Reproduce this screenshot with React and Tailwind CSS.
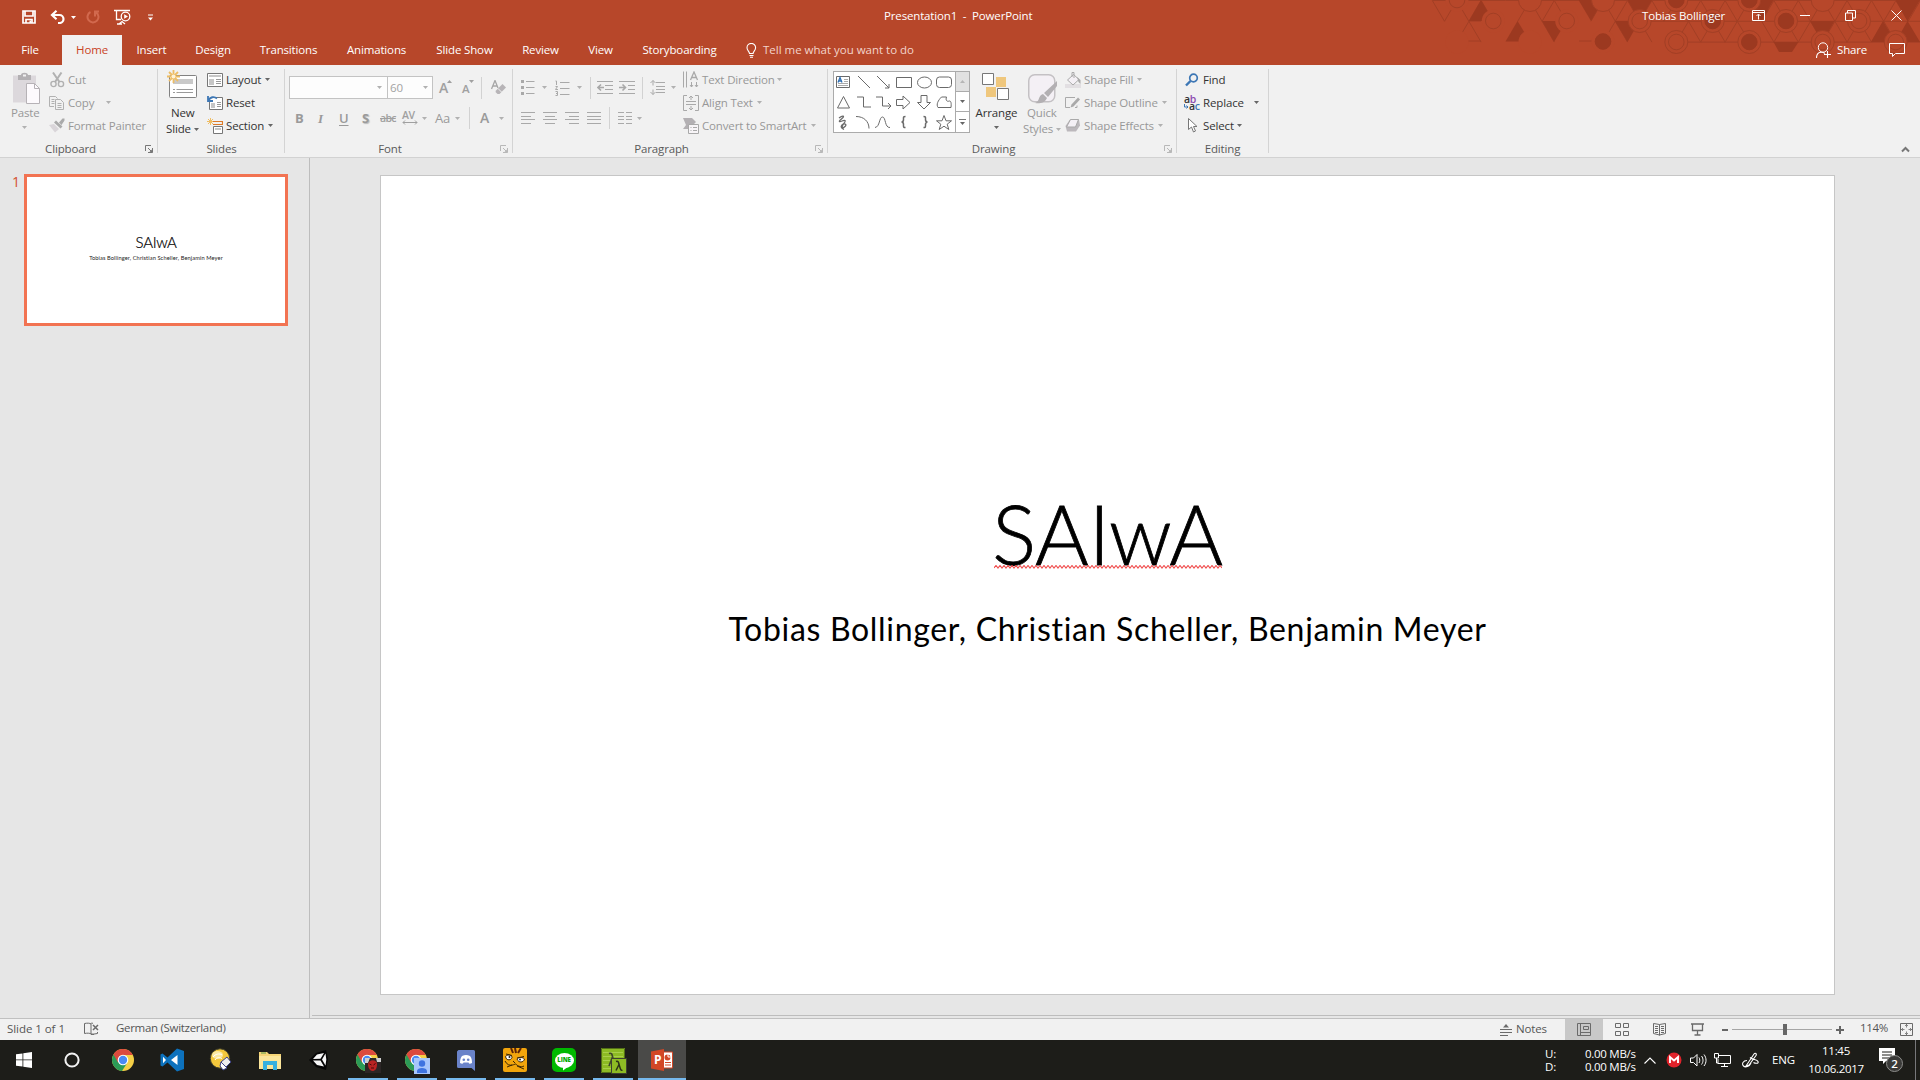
import React from "react";

/* ---------- small helpers ---------- */

function Svg({ w, h, className = "", children }) {
  return (
    <svg width={w} height={h} viewBox={`0 0 ${w} ${h}`} fill="none" className={`shrink-0 ${className}`}>
      {children}
    </svg>
  );
}

function Caret({ className = "text-[#666]" }) {
  return (
    <Svg w={5} h={3} className={className}>
      <path d="M0 0h5L2.500 3z" fill="currentColor" />
    </Svg>
  );
}

const DIM = "text-[#989898]";
const DARK = "text-[#333]";
const CARET_DIM = "text-[#b1b1b1]";

function Launcher({ dim }) {
  return (
    <Svg w={8} h={8} className={dim ? "text-[#b8b8b8]" : "text-[#777]"}>
      <path d="M.5 6V.5H6M3 3l3 3M7.500 3v4.500H3" stroke="currentColor" />
      <path d="M7.500 4v3.500H4z" fill="currentColor" />
    </Svg>
  );
}

function Group({ width, label, labelPad = "", launcher, children }) {
  return (
    <div className={`relative flex h-full shrink-0 flex-col ${width}`}>
      <div className="flex h-[76px] pt-[3px]">{children}</div>
      <div className={`flex h-[16px] items-center justify-center text-[#5a5a5a] ${labelPad}`}>{label}</div>
      {launcher && (
        <div className="absolute right-[5px] bottom-[4px]">
          <Launcher dim={launcher === "dim"} />
        </div>
      )}
      <div className="absolute top-[4px] right-0 h-[84px] w-px bg-[#d4d4d4]" />
    </div>
  );
}

function Command({ icon, label, labelWidth, caret, dim }) {
  return (
    <div className={`flex h-[23px] items-center ${dim ? DIM : DARK}`}>
      <div className="flex w-[19px] shrink-0 items-center">{icon}</div>
      <span className={`shrink-0 ${labelWidth}`}>{label}</span>
      {caret && <Caret className={dim ? CARET_DIM : "text-[#666]"} />}
    </div>
  );
}

function Divider({ className = "" }) {
  return <div className={`h-[22px] w-px shrink-0 bg-[#d2d2d2] ${className}`} />;
}

/* ---------- title bar pattern ---------- */

const LINE = "#a23f25";
const FILL = "#9c3920";

function HexPattern() {
  const STEP = 24.4;
  const RISE = 20.8;
  const X0 = 56.7;
  const point = (row, k) => [X0 + k * STEP + (row % 2 ? -STEP / 2 : 0), row * RISE + 0.5];
  const edges = [];
  for (let k = -1; k < 20; k++) {
    const [ax, ay] = point(0, k);
    edges.push(`M${ax} ${ay}h${STEP}`);
    const skip = [2, 5];
    if (k < 19 && !skip.includes(k)) edges.push(`M${ax} ${ay}l${STEP / 2} ${RISE}`);
    if (k >= 0 && ![2, 5].includes(k)) edges.push(`M${ax} ${ay}l${-STEP / 2} ${RISE}`);
    if (k > 6) edges.push(`M${point(1, k)[0]} ${RISE + 0.5}h${STEP}`);
    if (k > 8) edges.push(`M${point(2, k)[0]} ${2 * RISE + 0.5}h${STEP}`);
    if ([1, 4, 7, 8, 10, 11, 12, 13, 14, 15, 16, 17, 18].includes(k))
      edges.push(`M${point(1, k)[0]} ${RISE + 0.5}l${STEP / 2} ${RISE}`);
    if ([1, 7, 10, 11, 12, 14, 15, 16, 17, 18].includes(k))
      edges.push(`M${point(1, k)[0]} ${RISE + 0.5}l${-STEP / 2} ${RISE}`);
  }
  edges.push("M68 41h13M179 41h24M69 21h12");
  const tris = [
    "81,0 69,21 93,21", "117.5,21 105.5,41.5 130,41.5", "142,21 166.5,21 154,42",
    "178.5,0 203,0 191,21", "215,21 239.5,21 227.5,42", "227.5,0 252,0 239.5,21",
    "349.5,0 373.5,0 361.5,21", "410,21 434.5,21 422.5,42", "483,21 471,42 495.5,42",
    "507.5,21 495.5,42 520,42", "495.5,0 520,0 507.5,21", "373.5,42 398.5,42 392,52 379,52",
  ];
  /* kinds: 0 ring, 1 disc, 2 outer arc only, 3 blank */
  const rings = [
    [57, 0, 0], [130, 0, 2], [203, 0, 2], [276.3, 0, 1], [349.3, 0, 1], [422.7, 0, 2],
    [93.3, 21, 0], [166.7, 21, 0], [239.7, 21, 0], [312.7, 21, 1], [386, 21, 1], [459, 21, 0],
    [203, 41.5, 1], [276.3, 42, 0], [349.3, 42, 1], [422.7, 42, 0], [495.7, 42, 0], [130, 42, 3], [57, 42, 3],
  ];
  const plain = (x, y, kind) => kind === 3 || x < 100 || x === 166.7 || (x === 203 && y > 20);
  return (
    <svg width="520" height="54" viewBox="0 0 520 54" fill="none" className="absolute top-0 right-0">
      <path d={edges.join("")} stroke={LINE} />
      {tris.map((p) => <polygon key={p} points={p} fill={FILL} />)}
      {rings.map(([x, y, kind]) => (
        <g key={`${x}-${y}`}>
          <circle cx={x} cy={y} r="11.500" fill="#b7472a" stroke={plain(x, y, kind) ? "none" : LINE} />
          {kind < 2 && <circle cx={x} cy={y} r="7.800" fill={kind === 1 ? FILL : "none"} stroke={kind === 1 ? FILL : LINE} />}
        </g>
      ))}
    </svg>
  );
}

/* ---------- header ---------- */

function TitleBar() {
  return (
    <div className="relative flex h-[35px] items-center text-white">
      <div className="flex h-[28px] items-center pt-[2px] pl-[22px] mb-[3px]">
        <Svg w={14} h={14}>
          <path d="M1 1h12v12H1zM3 1v5h8V1M4 13V9.500h6V13" stroke="#fff" strokeWidth="1.700" />
          <path d="M7.500 10.500h1.500V13h-1.500z" fill="#fff" />
        </Svg>
        <Svg w={16} h={14} className="ml-[14px]">
          <path d="M2 5h7.500a4 4 0 0 1 0 8H8M6.500.8 2 5l4.500 4.200" stroke="#fff" strokeWidth="2.200" />
        </Svg>
        <Caret className="ml-[5px] text-white" />
        <Svg w={14} h={14} className="ml-[10px]">
          <path d="M4.500 2A5.500 5.500 0 1 0 10 2.300M13 1.500H9v5" stroke="#d2694e" strokeWidth="2" />
        </Svg>
        <Svg w={17} h={16} className="ml-[14px]">
          <path d="M0 1.500h16M2.500 1v9.500H7M5 15l3-2.500 3 2.500M3 15h5" stroke="#fff" strokeWidth="1.300" />
          <circle cx="11.500" cy="7.500" r="4.300" fill="#b7472a" stroke="#fff" strokeWidth="1.300" />
          <path d="M10.200 5.300 14 7.500l-3.800 2.200z" fill="#fff" />
        </Svg>
        <Svg w={5} h={7} className="ml-[17px]">
          <path d="M0 1h5" stroke="#fff" />
          <path d="M0 3.500h5L2.500 6.500z" fill="#fff" />
        </Svg>
      </div>
      <div className="mb-[3px] ml-[731px] w-[758px] whitespace-pre">Presentation1  -  PowerPoint</div>
      <div className="mb-[3px] flex items-center">
        <span className="w-[110px]">Tobias Bollinger</span>
        <Svg w={13} h={11} className="mb-[2px]">
          <path d="M.5.500h12v10H.500zM.5 2.500h12M6.500 9.500v-5M4.500 6l2-2 2 2" stroke="#fff" />
        </Svg>
        <Svg w={10} h={11} className="mb-[2px] ml-[35px]"><path d="M0 5.500h10" stroke="#fff" /></Svg>
        <Svg w={11} h={11} className="mb-[2px] ml-[35px]">
          <path d="M.5 3h7v7.500h-7zM2.500 3V.5h8v7.500h-3" stroke="#fff" />
        </Svg>
        <Svg w={11} h={11} className="mb-[2px] ml-[35px]"><path d="m.5.500 10 10m0-10-10 10" stroke="#fff" /></Svg>
      </div>
    </div>
  );
}

const TABS = [
  ["File", "w-[60px] mr-[2px]"], ["Home", "w-[60px]"], ["Insert", "w-[59px]"], ["Design", "w-[64px]"],
  ["Transitions", "w-[87px]"], ["Animations", "w-[89px]"], ["Slide Show", "w-[87px]"], ["Review", "w-[65px]"],
  ["View", "w-[55px]"], ["Storyboarding", "w-[103px]"],
];

function Tabs() {
  return (
    <div className="relative flex h-[30px] text-white">
      {TABS.map(([name, width]) => (
        <div
          key={name}
          className={`flex h-full items-center justify-center ${width} ${name === "Home" ? "bg-[#f1f1f1] text-[#c9431f]" : ""}`}
        >
          {name}
        </div>
      ))}
      <div className="ml-[15px] flex items-center tracking-[-0.01px] text-[#f3d4cb]">
        <Svg w={11} h={15} className="mr-[6px]">
          <path d="M3.500 10.500C3.500 8.500 1 7.500 1 4.700a4.300 4.300 0 0 1 8.600 0c0 2.800-2.500 3.800-2.500 5.800zM3.500 12.500h4M4 14.300h3" stroke="#fff" strokeWidth="1.100" />
        </Svg>
        Tell me what you want to do
      </div>
      <div className="ml-auto flex items-center pr-[15px]">
        <Svg w={16} h={17}>
          <circle cx="7" cy="5.500" r="4.700" stroke="#fff" />
          <path d="M.5 16c0-3.500 2-5.700 5-5.700 1.500 0 2.500.4 3.300 1.200M11.500 9v7M8 12.500h7" stroke="#fff" strokeWidth="1.100" />
        </Svg>
        <span className="ml-[5px] w-[52px]">Share</span>
        <Svg w={16} h={15}><path d="M.5.500h15v10h-9L3.500 13.500v-3h-3z" stroke="#fff" /></Svg>
      </div>
    </div>
  );
}

/* ---------- ribbon groups ---------- */

function ClipboardGroup() {
  return (
    <Group width="w-[158px]" label="Clipboard" labelPad="pr-[17px]" launcher="on">
      <div className={`ml-[9px] flex w-[40px] flex-col pt-[4px] ${DIM}`}>
        <Svg w={30} h={32} className="ml-[3px]">
          <path d="M1 3.500h23v27H1z" fill="#dcd8dc" />
          <path d="M6 3h3c0-3 7-3 7 0h3v5H6z" fill="#b3b0b3" />
          <path d="M11 2.500h3v2h-3z" fill="#f1f1f1" />
          <path d="M14.500 11.500h8l5 5v15h-13z" fill="#fdfafd" stroke="#b6b2b6" />
          <path d="M22.500 11.500v5h5" stroke="#b6b2b6" />
        </Svg>
        <span className="mt-[1px] ml-[2px] h-[16px] leading-[16px]">Paste</span>
        <Caret className={`mt-[5px] ml-[13px] ${CARET_DIM}`} />
      </div>
      <div>
        <Command dim label="Cut" icon={
          <Svg w={15} h={16} className="ml-[1px]">
            <path d="M3 .5 9.500 10M11.500.5 5 10" stroke="#b1b1b1" strokeWidth="2" />
            <circle cx="3.500" cy="12" r="2.600" stroke="#b1b1b1" strokeWidth="1.400" />
            <circle cx="11" cy="12" r="2.600" stroke="#b1b1b1" strokeWidth="1.400" />
          </Svg>} />
        <Command dim caret label="Copy" labelWidth="w-[38px]" icon={
          <Svg w={16} h={16}>
            <path d="M5 11.500H.5v-10h6l2 2M6.500 4.500h5l3 3v7h-8z" stroke="#b1b1b1" />
            <path d="M2.500 4.500h3M2.500 6.500h3M2.500 8.500h3M8.500 8.500h4M8.500 10.500h4M8.500 12.500h4" stroke="#b1b1b1" />
          </Svg>} />
        <Command dim label="Format Painter" icon={
          <Svg w={16} h={15}>
            <path d="M0 7l5-1 5 5-4 3.500z" fill="#d9d5d9" />
            <path d="m5 4.500 2-2 6.500 6-2 2zM10 4.500 13.500.5h2v2L12.500 7z" fill="#aaa" />
          </Svg>} />
      </div>
    </Group>
  );
}

function SlidesGroup() {
  return (
    <Group width="w-[127px]" label="Slides">
      <div className={`ml-[8px] flex w-[41px] flex-col pt-[2px] ${DARK}`}>
        <Svg w={32} h={30} className="ml-[1px]">
          <rect x="2.500" y="5.500" width="27" height="22" rx="1" fill="#fff" stroke="#828282" />
          <path d="M6 9h20v5H6z" fill="#c9c9c9" />
          <path d="M6 19.500h2M9.500 19.500H26M6 22.500h2M9.500 22.500H26" stroke="#9a9a9a" />
          <path d="M6.500 0v13M0 6.500h13M2 2l9 9M11 2l-9 9" stroke="#eebd64" strokeWidth="1.800" />
          <circle cx="6.500" cy="6.500" r="2" fill="#fff3d5" />
        </Svg>
        <span className="mt-[5px] ml-[5px] h-[16px] leading-[16px]">New</span>
        <div className="flex h-[16px] items-center"><span className="w-[28px]">Slide</span><Caret /></div>
      </div>
      <div>
        <Command caret label="Layout" labelWidth="w-[39px]" icon={
          <Svg w={16} h={14}>
            <path d="M.5.500h15v13H.500z" fill="#fff" stroke="#777" />
            <path d="M2 2h12v2H2zM2 6h5v6H2z" fill="#c6c6c6" />
            <path d="M9 6.500h5M9 8.500h5M9 10.500h5" stroke="#999" />
          </Svg>} />
        <Command label="Reset" icon={
          <Svg w={16} h={15}>
            <path d="M2.500 5v9.500h13v-12H9" fill="#fff" stroke="#777" />
            <path d="M4 8h4v5H4z" fill="#c6c6c6" />
            <path d="M10 7.500h4M10 9.500h4M10 11.500h4" stroke="#999" />
            <path d="M1.500 5.500C3 2 7 1 10 3.500M1 1v5h5" stroke="#3d77b5" strokeWidth="1.800" />
          </Svg>} />
        <Command caret label="Section" labelWidth="w-[42px]" icon={
          <Svg w={16} h={16}>
            <path d="M3.500 0v7M0 3.500h7M1 1l5 5M6 1 1 6" stroke="#eebd64" />
            <path d="M6 3.500h9.500v3H6" stroke="#dd7b28" strokeWidth="1.200" />
            <path d="M6.500 8.500h9v7h-9z" fill="#fff" stroke="#777" />
            <path d="M8 10h6v2H8z" fill="#c6c6c6" />
          </Svg>} />
      </div>
    </Group>
  );
}

function FontGroup() {
  const letter = "text-[13px] leading-none text-[#9a9a9a]";
  return (
    <Group width="w-[228px]" label="Font" labelPad="pr-[18px]" launcher="dim">
      <div className="ml-[4px] flex flex-col">
        <div className="mt-[8px] flex h-[23px] items-center">
          <div className="flex h-[23px] w-[99px] items-center justify-end border border-[#c3c3c3] bg-[#fdfdfd] pr-[5px]">
            <Caret className={CARET_DIM} />
          </div>
          <div className="-ml-px flex h-[23px] w-[46px] items-center border border-[#c3c3c3] bg-[#fdfdfd] pl-[2px] text-[#a3a3a3]">
            <span className="w-[33px]">60</span>
            <Caret className={CARET_DIM} />
          </div>
          <div className="ml-[6px] flex w-[23px] items-center font-semibold text-[#a0a0a0]">
            <span className="text-[14px]">A</span>
            <Svg w={5} h={3} className="mb-[12px] -ml-[1px]"><path d="M0 3h5L2.500 0z" fill="#a0a0a0" /></Svg>
          </div>
          <div className="flex w-[19px] items-center font-semibold text-[#a0a0a0]">
            <span className="mt-[2px] text-[11.500px]">A</span>
            <Svg w={5} h={3} className="mb-[12px]"><path d="M0 0h5L2.500 3z" fill="#a0a0a0" /></Svg>
          </div>
          <Divider />
          <Svg w={16} h={16} className="ml-[9px]">
            <path d="M.5 9 4 .5 7 8M1.800 6h4" stroke="#a6a6a6" strokeWidth="1.300" />
            <path d="m5 10.500 6.500-6.500 3.500 3.500L8.500 14H6.500L4.500 12z" fill="#b7b4b7" />
            <path d="m7 8.500 4 4" stroke="#f1f1f1" />
          </Svg>
        </div>
        <div className="mt-[8px] flex h-[22px] items-center">
          <span className={`ml-[6px] w-[23px] font-bold ${letter}`}>B</span>
          <span className={`w-[21px] font-['Liberation_Serif',serif] italic font-bold ${letter}`}>I</span>
          <span className={`w-[23px] font-semibold underline underline-offset-2 ${letter}`}>U</span>
          <span className={`w-[18px] font-bold [text-shadow:1px_1px_1px_#bbb] ${letter}`}>S</span>
          <span className="w-[22px] text-[10.500px] leading-none font-semibold tracking-[-0.7px] text-[#a0a0a0] line-through">abc</span>
          <div className="flex w-[20px] flex-col">
            <span className="text-[10.500px] leading-[9px] font-semibold tracking-[-0.4px] text-[#a0a0a0]">AV</span>
            <Svg w={16} h={5}><path d="M1 2.500h14M3 .5l-2 2 2 2M13 .5l2 2-2 2" stroke="#a0a0a0" /></Svg>
          </div>
          <Caret className={CARET_DIM} />
          <span className={`ml-[8px] w-[20px] ${letter}`}>Aa</span>
          <Caret className={CARET_DIM} />
          <Divider className="ml-[9px]" />
          <span className="ml-[10px] w-[19px] text-[14px] leading-none font-semibold text-[#9a9a9a]">A</span>
          <Caret className={CARET_DIM} />
        </div>
      </div>
    </Group>
  );
}

const G = "#a9a9a9";

function AlignIcon({ d, className = "" }) {
  return <Svg w={14} h={12} className={className}><path d={d} stroke={G} /></Svg>;
}

function ParagraphGroup() {
  return (
    <Group width="w-[315px]" label="Paragraph" labelPad="pr-[18px]" launcher="dim">
      <div className="ml-[8px] flex w-[162px] flex-col">
        <div className="mt-[8px] flex h-[23px] items-center">
          <Svg w={14} h={15}>
            <path d="M5 1.500h8.500M5 7.500h8.500M5 13.500h8.500" stroke={G} />
            <path d="M0 0h3v3H0zM0 6h3v3H0zM0 12h3v3H0z" fill={G} />
          </Svg>
          <Caret className={`ml-[7px] ${CARET_DIM}`} />
          <Svg w={15} h={16} className="ml-[8px]">
            <path d="M5 2.500h9.500M5 8.500h9.500M5 14.500h9.500" stroke={G} />
            <path d="M.5 1h1v4M.5 6.500h2L.5 9.500h2.500M.5 11.500h2v4h-2M1 13.500h1.500" stroke={G} />
          </Svg>
          <Caret className={`ml-[7px] ${CARET_DIM}`} />
          <Divider className="ml-[8px]" />
          <Svg w={16} h={14} className="ml-[6px]">
            <path d="M0 .5h16M8 4.500h8M8 8.500h8M0 12.500h16" stroke={G} />
            <path d="M7 6.500H1M4 3.500l-3 3 3 3" stroke={G} strokeWidth="1.600" />
          </Svg>
          <Svg w={16} h={14} className="ml-[6px]">
            <path d="M0 .5h16M9 4.500h7M9 8.500h7M0 12.500h16" stroke={G} />
            <path d="M0 6.500h6M3.500 3.500l3 3-3 3" stroke={G} strokeWidth="1.600" />
          </Svg>
          <Divider className="ml-[7px]" />
          <Svg w={15} h={17} className="ml-[7px]">
            <path d="M6 3.500h9M6 7.500h9M6 10.500h9M6 13.500h9M3 1.500v5M3 10.500v5M.5 4 3 1.500 5.500 4M.5 13 3 15.500 5.500 13" stroke={G} />
          </Svg>
          <Caret className={`ml-[6px] ${CARET_DIM}`} />
        </div>
        <div className="mt-[8px] flex h-[22px] items-center gap-[8px]">
          <AlignIcon d="M0 .5h14M0 4.500h10M0 7.500h14M0 11.500h10" />
          <AlignIcon d="M0 .5h14M2 4.500h10M0 7.500h14M2 11.500h10" />
          <AlignIcon d="M0 .5h14M4 4.500h10M0 7.500h14M4 11.500h10" />
          <AlignIcon d="M0 .5h14M0 4.500h14M0 7.500h14M0 11.500h14" />
          <Divider />
          <AlignIcon d="M0 .5h6M8 .5h6M0 4.500h6M8 4.500h6M0 7.500h6M8 7.500h6M0 11.500h6M8 11.500h6" />
          <Caret className={`-ml-[3px] ${CARET_DIM}`} />
        </div>
      </div>
      <div>
        <Command dim caret label="Text Direction" labelWidth="w-[75px]" icon={
          <Svg w={16} h={17}>
            <path d="M.5.5v16M3.500.5v16M8.500 11v5M13.500 11v5M7 14l1.500 2 1.500-2M12 14l1.500 2 1.500-2" stroke={G} />
            <path d="m7.500 9 3.500-8 3.500 8M8.500 6.500h5" stroke={G} strokeWidth="1.300" />
          </Svg>} />
        <Command dim caret label="Align Text" labelWidth="w-[55px]" icon={
          <Svg w={16} h={16}>
            <path d="M4 .5H.5v15H4M12 .5h3.500v15H12M3 6.500h10M3 9.500h10M8 1v4M6 3l2-2 2 2M8 15v-4M6 13l2 2 2-2" stroke={G} />
          </Svg>} />
        <Command dim caret label="Convert to SmartArt" labelWidth="w-[109px]" icon={
          <Svg w={16} h={16}>
            <path d="M0 0h9l4 4-3 3H5v4H0l3-4z" fill="#b3b0b3" />
            <path d="M5.500 6.500h10v9h-10z" fill="#f8f5f8" stroke={G} />
            <path d="M7.500 9.500h1M10 9.500h4M7.500 12.500h1M10 12.500h4" stroke={G} />
          </Svg>} />
      </div>
    </Group>
  );
}

const SHAPES = [
  <g key="0"><path d="M2.500 4.500h13v11h-13z" /><path d="M10 7.500h4M10 9.500h4M4 11.500h10M4 13.500h10" stroke="#aaa" /><path d="m4 10.500 2-5 2 5M5 9h2.500" stroke="#2f6fb3" strokeWidth="1.300" /></g>,
  <path key="1" d="m4 4 12 12" />,
  <path key="2" d="m3 4 12 12M15 12v4h-4" />,
  <path key="3" d="M2.500 5.500h15v10h-15z" />,
  <ellipse key="4" cx="9.500" cy="10.500" rx="7" ry="5.500" />,
  <rect key="5" x="1.500" y="5" width="15" height="10.500" rx="3" />,
  <path key="6" d="M9.500 4.500 15.500 16h-12z" />,
  <path key="7" d="M3 5h6.500v10H17" />,
  <path key="8" d="M2 5h6.500v9H17M14 11l3 3-3 3" />,
  <path key="9" d="M2.500 7.500H9V4l7 6.500L9 17v-3.500H2.500z" />,
  <path key="10" d="M6 3.500h6v7h3.500L9 17 2.500 10.500H6z" />,
  <path key="11" d="M3 15.500c-2-3 0-7 3.500-10.500h5c-1 3 0 5 3 4 1.500 0 2 2 1.500 6.500z" />,
  <path key="12" d="M5 6c4-3 6-2 3 .5s-4 4 0 2.500 4 0 1.500 3-1 5 1.500 2.500-1-3.500-3-1.500 0 3.500 2 4.500" strokeWidth="1.300" />,
  <path key="13" d="M2 4.500c8 0 13 5 13 12" />,
  <path key="14" d="M1 15.500C6 15 5 5 8.500 5s2 11 7.500 10.500" />,
  <path key="15" d="M11.500 4.500c-2.500 0-2 1-2 3 0 1.500-.5 2.500-2 2.500 1.500 0 2 1 2 2.500 0 2-.5 3 2 3" strokeWidth="1.500" />,
  <path key="16" d="M8.500 4.500c2.500 0 2 1 2 3 0 1.500.5 2.500 2 2.500-1.500 0-2 1-2 2.500 0 2 .5 3-2 3" strokeWidth="1.500" />,
  <path key="17" d="m9 3.500 2 5.300h5.500l-4.300 3.400 1.600 5.300L9 14.200l-4.800 3.300 1.600-5.300L1.500 8.800H7z" />,
];

function DrawingGroup() {
  return (
    <Group width="w-[349px]" label="Drawing" labelPad="pr-[18px]" launcher="dim">
      <div className="mt-[3px] ml-[5px] flex h-[62px] w-[137px] border border-[#ababab] bg-white">
        <div className="grid w-[121px] grid-cols-6 grid-rows-3">
          {SHAPES.map((s, i) => (
            <svg key={i} width="20" height="20" viewBox="0 0 20 20" fill="none" stroke="#6a6a6a">{s}</svg>
          ))}
        </div>
        <div className="flex w-[14px] flex-col divide-y divide-[#ababab] border-l border-[#ababab]">
          <div className="flex h-[20px] items-center justify-center bg-[#e1e1e1]">
            <Svg w={5} h={3}><path d="M0 3h5L2.500 0z" fill="#b5b5b5" /></Svg>
          </div>
          <div className="flex h-[20px] items-center justify-center"><Caret /></div>
          <div className="flex h-[20px] flex-col items-center justify-center gap-[2px]">
            <div className="h-px w-[7px] bg-[#777]" />
            <Caret />
          </div>
        </div>
      </div>
      <div className={`ml-[4px] flex w-[45px] flex-col items-center pt-[5px] ${DARK}`}>
        <Svg w={28} h={28} className="mr-[2px]">
          <path d="M14 4h10v10H14zM4 14h10v10H4z" fill="#efc77d" />
          <path d="M.5.500h11v11H.500zM15.500 15.500h11v11h-11z" fill="#fff" stroke="#777" />
        </Svg>
        <span className="mt-[4px] h-[16px] leading-[16px]">Arrange</span>
        <Caret className="mt-[5px] text-[#666]" />
      </div>
      <div className={`ml-[3px] flex w-[43px] flex-col pt-[6px] ${DIM}`}>
        <Svg w={30} h={31} className="ml-[6px]">
          <rect x=".75" y=".75" width="26" height="27" rx="6" fill="#f4f0f5" stroke="#c4c1c4" strokeWidth="1.500" />
          <path d="M29 7v5l-9 11-4-4zM15 20l4 4c-2 5-8 6-12 5 5-1 3-8 8-9z" fill="#b3b0b3" />
        </Svg>
        <span className="ml-[5px] h-[16px] leading-[16px]">Quick</span>
        <div className="flex h-[16px] items-center pl-px"><span className="w-[33px]">Styles</span><Caret className={CARET_DIM} /></div>
      </div>
      <div>
        <Command dim caret label="Shape Fill" labelWidth="w-[53px]" icon={
          <Svg w={17} h={16}>
            <path d="M0 12h16v4H0z" fill="#e2dfe2" />
            <path d="m2.500 8 6-5.500 5.500 5-6 5.500zM7 5V.5h2V6" fill="#f4f0f5" stroke={G} />
            <path d="m12 5 3.500 3v4l-2-2z" fill={G} />
          </Svg>} />
        <Command dim caret label="Shape Outline" labelWidth="w-[78px]" icon={
          <Svg w={16} h={14}>
            <path d="M10 1.500H.5v10H5M12 9.500v2h-2" stroke={G} />
            <path d="m5.500 11.500 1-3L13 1.500l2 2-6.500 7z" fill={G} />
          </Svg>} />
        <Command dim caret label="Shape Effects" labelWidth="w-[74px]" icon={
          <Svg w={16} h={15}>
            <path d="M5 1.500h9l1 6-4 6H2L.5 8z" fill="#bcb8bc" />
            <path d="M5.500 1.500h8L10.500 9h-9z" fill="#f4f0f5" stroke={G} />
          </Svg>} />
      </div>
    </Group>
  );
}

function EditingGroup() {
  return (
    <Group width="w-[92px]" label="Editing" labelPad="pr-px">
      <div className="ml-[7px]">
        <Command label="Find" icon={
          <Svg w={14} h={14} className="ml-px">
            <circle cx="8.500" cy="5" r="3.800" stroke="#3d77b5" strokeWidth="1.700" />
            <path d="m5.500 8-4.500 4.500" stroke="#3d77b5" strokeWidth="2.400" />
          </Svg>} />
        <Command caret label="Replace" labelWidth="w-[51px]" icon={
          <div className="flex flex-col text-[10.500px] leading-[7px] font-semibold tracking-[-0.3px]">
            <span>a<span className="text-[#8c4bb0]">b</span></span>
            <span className="flex items-end">
              <Svg w={5} h={5} className="mb-[1px]"><path d="M.5 0v3H4M2.500 1.500 4 3 2.500 4.500" stroke="#3d77b5" /></Svg>
              a<span className="text-[#3d77b5]">c</span>
            </span>
          </div>} />
        <Command caret label="Select" labelWidth="w-[34px]" icon={
          <Svg w={12} h={15} className="ml-[4px]">
            <path d="M.5.500v11l3-2.500 2 5 2-1-2-4.500h3.500z" fill="#fff" stroke="#777" />
          </Svg>} />
      </div>
    </Group>
  );
}

/* ---------- workspace ---------- */

function Squiggle() {
  let d = "M0 3";
  for (let x = 2; x <= 228; x += 2) d += `L${x} ${(x / 2) % 2 ? 0.5 : 3}`;
  return <Svg w={228} h={4}><path d={d} stroke="#f04c4c" strokeWidth="1.100" /></Svg>;
}

function Workspace() {
  return (
    <div className="flex h-[860px] bg-[#e6e6e6]">
      <div className="flex w-[310px] shrink-0 border-r border-[#bdbdbd] pt-[16px]">
        <span className="w-[24px] pl-[12px] text-[14px] leading-[15px] text-[#d4502e]">1</span>
        <div className="flex h-[152px] w-[264px] flex-col items-center border-[3px] border-[#f27352] bg-white font-['Lato',sans-serif] text-black">
          <span className="mt-[55px] text-[15px] leading-[20px] font-light tracking-[-0.3px] [-webkit-text-stroke:0.2px_black]">SAIwA</span>
          <span className="mt-[2px] text-[5.700px] leading-[8px] tracking-[0.100px] text-[#222]">Tobias Bollinger, Christian Scheller, Benjamin Meyer</span>
        </div>
      </div>
      <div className="flex min-w-0 flex-1 flex-col">
        <div className="mt-[17px] ml-[70px] flex h-[820px] w-[1455px] flex-col items-center border border-[#c6c6c6] bg-white font-['Lato',sans-serif] text-black">
          <div className="mt-[308px] flex h-[87px] flex-col items-center">
            <span className="text-[82px] leading-[98px] font-light whitespace-nowrap [-webkit-text-stroke:0.8px_black]">SAIwA</span>
            <div className="-mt-[17px]"><Squiggle /></div>
          </div>
          <span className="mt-[38px] text-[32px] leading-[40px] tracking-[0.680px] whitespace-nowrap">Tobias Bollinger, Christian Scheller, Benjamin Meyer</span>
        </div>
        <div className="mt-auto mb-[2px] ml-[2px] h-px bg-[#bdbdbd]" />
      </div>
    </div>
  );
}

function StatusBar() {
  const S = "#6a6a6a";
  return (
    <div className="flex h-[22px] items-center border-t border-[#c0c0c0] bg-[#f1f1f1] text-[#555]">
      <span className="w-[84px] pb-[1px] pl-[7px] tracking-[-0.05px]">Slide 1 of 1</span>
      <Svg w={15} h={14} className="mr-[17px] mb-[1px]">
        <path d="M9 1.500C7.500.5 7 1 7 2v10c-1-1-4-1-6.500-.5V1.500C3 1 6 1 7 2M7 12l3 .5M13.500 10v1.500L7 12.500" stroke={S} />
        <path d="m9 3 5 5M14 3 9 8" stroke={S} strokeWidth="1.500" />
      </Svg>
      <span className="pb-[3px] tracking-[-0.3px]">German (Switzerland)</span>
      <div className="ml-auto flex h-full items-center">
        <Svg w={12} h={12} className="mr-[4px]">
          <path d="M0 5.500h12M0 8.500h12M0 11.500h8" stroke={S} /><path d="M3 3.500h6L6 0z" fill={S} />
        </Svg>
        <span className="w-[49px] pb-[1px]">Notes</span>
        <div className="flex h-full w-[38px] items-center justify-center bg-[#c8c8c8]">
          <Svg w={14} h={13}><path d="M.5.500h13v12H.500zM3.500.5v12M3.500 9.500h10M6.500 3.500h5v3h-5z" stroke={S} /></Svg>
        </div>
        <div className="flex w-[38px] justify-center">
          <Svg w={14} h={13}><path d="M.5.500h5v4h-5zM8.500.500h5v4h-5zM.5 8.500h5v4h-5zM8.500 8.500h5v4h-5z" stroke={S} /></Svg>
        </div>
        <div className="flex w-[37px] justify-center">
          <Svg w={13} h={13}>
            <path d="M.5.500 6.500 1.500l6-1v10l-6 1.500-6-1.500zM6.500 1.500v11M2 3.500h3M2 5.500h3M2 7.500h3M8 3.500h3M8 5.500h3M8 7.500h3M2 9.500h3M8 9.500h3" stroke={S} />
          </Svg>
        </div>
        <div className="flex w-[38px] justify-center">
          <Svg w={13} h={13}><path d="M0 1h13M1.500 1v6.500h10V1M6.500 8v4M3.500 12h6" stroke={S} strokeWidth="1.300" /></Svg>
        </div>
        <div className="ml-[6px] h-[2px] w-[6px] bg-[#666]" />
        <div className="ml-[4px] flex w-[100px] items-center">
          <div className="h-px w-[51px] bg-[#a5a5a5]" />
          <div className="h-[11px] w-[4px] bg-[#666]" />
          <div className="h-px flex-1 bg-[#a5a5a5]" />
        </div>
        <Svg w={8} h={8} className="ml-[4px]"><path d="M0 4h8M4 0v8" stroke="#666" strokeWidth="2" /></Svg>
        <span className="ml-[16px] w-[40px] pb-[3px] tracking-[-0.35px]">114%</span>
        <Svg w={13} h={13} className="mr-[7px]">
          <path d="M.5.500h12v12H.500z" stroke={S} />
          <path d="M6.500 1v3.500M6.500 8.500V12M1 6.500h3.500M8.500 6.500H12M5 3l1.500-1.500L8 3M5 10l1.500 1.500L8 10M3 5 1.500 6.500 3 8M10 5l1.500 1.500L10 8" stroke={S} strokeWidth=".8" />
        </Svg>
      </div>
    </div>
  );
}

/* ---------- taskbar ---------- */

function Chrome() {
  return (
    <>
      <circle cx="11" cy="11" r="11" fill="#f5cf46" />
      <path d="M11 11 1.500 5.500A11 11 0 0 0 10 22l5.500-8.500z" fill="#2b9b57" />
      <path d="M1.500 5.500A11 11 0 0 1 20.800 6H11L6 13.500z" fill="#dc4a3e" />
      <circle cx="11" cy="11" r="5.300" fill="#fff" />
      <circle cx="11" cy="11" r="4.200" fill="#4a8af4" />
    </>
  );
}

const APPS = [
  { name: "start", icon: <Svg w={16} h={16}><path d="M0 2.300 6.500 1.400v6.100H0zM7.300 1.300 16 0v7.500H7.300zM0 8.300h6.500v6.300L0 13.700zM7.300 8.300H16V16l-8.700-1.300z" fill="#fff" /></Svg> },
  { name: "cortana", gap: true, icon: <Svg w={16} h={16}><circle cx="8" cy="8" r="6.600" stroke="#f2f2f2" strokeWidth="2" /></Svg> },
  { name: "chrome", icon: <Svg w={22} h={22}><Chrome /></Svg> },
  { name: "code", icon: (
    <Svg w={24} h={24}>
      <path d="M17 .5 24 3v18l-7 2.500L7.500 14.500 2.500 18.500.5 17.500V6.500L2.500 5.500l5 4z" fill="#0d72bd" />
      <path d="M17.500 7v10L11 12zM3 8.800v6.400L6 12z" fill="#fff" />
    </Svg>) },
  { name: "sync", icon: (
    <Svg w={24} h={24}>
      <circle cx="11" cy="10.500" r="9.700" fill="#f4c83c" stroke="#40402c" />
      <ellipse cx="8.500" cy="7" rx="5.500" ry="4" fill="#fbe9a2" />
      <path d="M4 9c2-3 7-4 9-2M6 12c2-3 5-3 7-1" stroke="#fff" />
      <path d="m12 14 6-5 4 5-6 6z" fill="#eee" stroke="#3b4185" />
      <path d="m12 14-1 4 3 4 4-2z" fill="#fff" stroke="#3b4185" />
    </Svg>) },
  { name: "explorer", icon: (
    <Svg w={22} h={20} className="mt-[1px]">
      <path d="M0 1h8l2 2h12v15H0z" fill="#f6d577" />
      <path d="M0 5h22v13H0z" fill="#fbe59a" />
      <path d="M2 1.500h5v1H2z" fill="#5f9a49" />
      <path d="M4 10h14v9h-4v-5H8v5H4z" fill="#37b0e0" />
    </Svg>) },
  { name: "unity", icon: (
    <Svg w={22} h={22}>
      <path d="M1 11 8 4l10-3 2 9-2 11-10-3z" fill="#060606" />
      <path d="m5 10 4-4.500L16 4l-3.500 5.700zM17.500 4.500l.8 6-.8 6L14 10.500zM5 11.500l4 4.500 7 1.500-3.500-6z" fill="#f6f6f6" />
    </Svg>) },
  { name: "chrome-dark", running: true, icon: (
    <Svg w={25} h={24} className="mt-[2px]">
      <Chrome />
      <path d="M9 9h16v15H9z" fill="#2c2626" /><path d="M9 9h5l-2 5H9zM20 9h5v4h-4z" fill="#cfcfcf" />
      <path d="M12 15c1-5 9-5 9 0s-2 7-4.500 7-4.500-3-4.500-7z" fill="#b82323" />
      <path d="m13.500 15 2 1M17.500 16l2-1.500M15 19h3" stroke="#4a0808" />
    </Svg>) },
  { name: "chrome-user", running: true, icon: (
    <Svg w={25} h={25} className="mt-[3px] ml-px">
      <Chrome />
      <path d="M9 9h16v16H9z" fill="#a7c6fb" />
      <circle cx="17" cy="14.500" r="3.200" fill="#3f74e0" />
      <path d="M12 24v-2c0-4 10-4 10 0v2z" fill="#3f74e0" />
    </Svg>) },
  { name: "discord", running: true, icon: (
    <Svg w={18} h={21}>
      <path d="M1.500 0h15A1.500 1.500 0 0 1 18 1.500V21l-3.500-3h-13A1.500 1.500 0 0 1 0 16.500v-15z" fill="#6a83c9" />
      <path d="M5 6c3-1.500 5-1.500 8 0 2 2.500 2 5 2 7-2 1.200-3 1-3.500-.5h-5C6 14 5 14 3 13c0-2.500.5-5 2-7z" fill="#fff" />
      <circle cx="6.800" cy="9.700" r="1.300" fill="#6a83c9" /><circle cx="11.200" cy="9.700" r="1.300" fill="#6a83c9" />
    </Svg>) },
  { name: "cat", running: true, icon: (
    <Svg w={24} h={24}>
      <rect width="24" height="24" rx="2" fill="#f2a50c" />
      <path d="m8 0 2 5M12 0l1 5M18 0l-3 5" stroke="#5d2408" strokeWidth="2" />
      <path d="M2.500 8.500C5 6 9 7 9 9.500c-1 3-5 3-6 .500zM14 11c1-2 6-2 7.500 0-1 4-6 4-7.500 0z" fill="#fff" stroke="#3a2505" />
      <path d="M3 6l6 1.500M14 10l7-1.500M10 13l2 2M2 13c4 8 11 2 11 3s5 4 8 2M4 19l5-2M14 18l7 3" stroke="#3a2505" />
      <circle cx="6.500" cy="9" r="1" fill="#222" /><circle cx="17" cy="11.500" r="1" fill="#222" />
    </Svg>) },
  { name: "line", running: true, icon: (
    <div className="flex h-[24px] w-[24px] items-center justify-center rounded-[5px] bg-[#00b900]">
      <div className="relative flex h-[15px] w-[19px] items-center justify-center rounded-[50%] bg-white">
        <span className="text-[6px] leading-none font-extrabold tracking-[-0.1px] text-[#00a800]">LINE</span>
        <Svg w={6} h={5} className="absolute -bottom-[3px] left-[8px]"><path d="M0 4.500 6 0H0z" fill="#fff" /></Svg>
      </div>
    </div>) },
  { name: "lambda", running: true, icon: (
    <div className="relative h-[25px] w-[24px] bg-[#8dbb24]">
      <Svg w={26} h={27} className="absolute top-0 left-0">
        <path d="M.5.500h23v24H.500z" stroke="#537017" />
        <path d="M2 4.500h20M2 8.500h20M2 12.500h8M2 16.500h8M2 20.500h8" stroke="#a9d04b" />
        <path d="M8 5.500c3-1 3 1 4 5M11.500 9 8 18" stroke="#3f4a2a" strokeWidth="1.700" />
        <path d="M10.500 10.500h15v15h-15z" fill="#8dbb24" stroke="#3d4030" />
        <path d="M15 13.500c2.500-1 2.500 1 3.500 4.500s1.500 5 3 4M18 16.500l-3 6" stroke="#2b3218" strokeWidth="1.500" />
      </Svg>
    </div>) },
  { name: "powerpoint", running: true, active: true, icon: (
    <div className="relative flex h-[22px] w-[22px] items-center">
      <Svg w={22} h={22} className="absolute inset-0">
        <path d="M12 3h9.500v16H12z" fill="#fff" stroke="#d24726" />
        <path d="M14 13.500h6M14 16h6" stroke="#d24726" />
        <circle cx="16.500" cy="8.500" r="3" fill="#d24726" /><path d="M17 8V5M17 8h3" stroke="#fff" />
        <path d="M0 2.500 13 0v22L0 19.500z" fill="#d24726" />
      </Svg>
      <span className="relative ml-[3px] text-[12px] leading-none font-bold text-white">P</span>
    </div>) },
];

function Taskbar() {
  return (
    <div className="flex h-[40px] bg-[#1d1d19] text-white">
      {APPS.map((a) => (
        <div
          key={a.name}
          className={`flex h-full w-[48px] shrink-0 flex-col ${a.name === "start" ? "" : a.gap ? "mr-[3px]" : "mr-px"} ${a.active ? "bg-[#4a4a48]" : ""}`}
        >
          <div className="-mb-[2px] flex h-[40px] shrink-0 items-center justify-center">{a.icon}</div>
          {a.running && <div className={`h-[2px] bg-[#76b9ed] ${a.active ? "" : "mx-[4px]"}`} />}
        </div>
      ))}
      <div className="ml-auto flex items-center">
        <div className="flex w-[40px] flex-col leading-[13px]"><span>U:</span><span>D:</span></div>
        <div className="flex w-[59px] flex-col leading-[13px] tracking-[-0.28px]"><span>0.00 MB/s</span><span>0.00 MB/s</span></div>
        <Svg w={12} h={7}><path d="M.5 6.500 6 1l5.500 5.500" stroke="#fff" strokeWidth="1.100" /></Svg>
        <Svg w={16} h={16} className="ml-[10px]">
          <circle cx="8" cy="8" r="7.500" fill="#e0232b" />
          <path d="M4 11V5l4 3.500L12 5v6" stroke="#fff" strokeWidth="1.900" />
        </Svg>
        <Svg w={17} h={14} className="ml-[8px]">
          <path d="M.5 5v4.500h3l3.500 3.500V1.500L3.500 5zM9 4.500c1 1.500 1 4 0 5.500M11.500 3c2 2.500 2 6 0 8.500M14 1.500c2.700 3.500 2.700 8 0 11.500" stroke="#fff" />
        </Svg>
        <Svg w={17} h={14} className="ml-[7px]">
          <path d="M5 2.500h11.500v8H4V6M10.500 10.500v3M7 13.500h7M.5.500h4V5h-4zM2.500 5v5H4" stroke="#fff" />
        </Svg>
        <Svg w={17} h={17} className="ml-[11px]">
          <path d="M5 12.500 12 2c1-1.500 3-.5 2 1.500l-7 9.500-3 1zM8 5.500C11 8 15 7 16 9.500s-3 2-4.500 1M5 8.500C1 8.500-.5 12 1.500 14s6 .500 7.500-3" stroke="#fff" strokeWidth="1.100" />
        </Svg>
        <span className="ml-[13px] w-[36px]">ENG</span>
        <div className="mb-[1px] flex w-[56px] flex-col items-center leading-[18px] tracking-[-0.3px]"><span>11:45</span><span>10.06.2017</span></div>
        <div className="relative ml-[15px] h-[24px] w-[25px]">
          <Svg w={16} h={16}>
            <path d="M0 0h16v13H7l-3 3v-3H0z" fill="#fff" />
            <path d="M3 4h10M3 7h10M3 10h7" stroke="#1d1d19" />
          </Svg>
          <div className="absolute top-[7px] left-[7px] flex h-[17px] w-[17px] items-center justify-center rounded-full border border-[#8d8d8b] bg-[#3a3a38] font-semibold">2</div>
        </div>
        <div className="mr-[4px] ml-[11px] h-[40px] w-px bg-[#77777a]" />
      </div>
    </div>
  );
}

export default function App() {
  return (
    <div className="flex h-[1080px] w-[1920px] flex-col overflow-hidden bg-[#e6e6e6] font-['Open_Sans','Noto_Sans',sans-serif] text-[11.500px] leading-[16px] tracking-[-0.15px] whitespace-nowrap">
      <header className="relative h-[65px] shrink-0 bg-[#b7472a]">
        <HexPattern />
        <TitleBar />
        <Tabs />
      </header>
      <div className="relative flex h-[93px] shrink-0 border-b border-[#d2d2d2] bg-[#f1f1f1]">
        <ClipboardGroup />
        <SlidesGroup />
        <FontGroup />
        <ParagraphGroup />
        <DrawingGroup />
        <EditingGroup />
        <div className="mt-auto ml-auto pr-[10px] pb-[4px]">
          <Svg w={9} h={7}><path d="m1 5.500 3.500-3.500L8 5.500" stroke="#777" strokeWidth="2" /></Svg>
        </div>
      </div>
      <Workspace />
      <StatusBar />
      <Taskbar />
    </div>
  );
}
